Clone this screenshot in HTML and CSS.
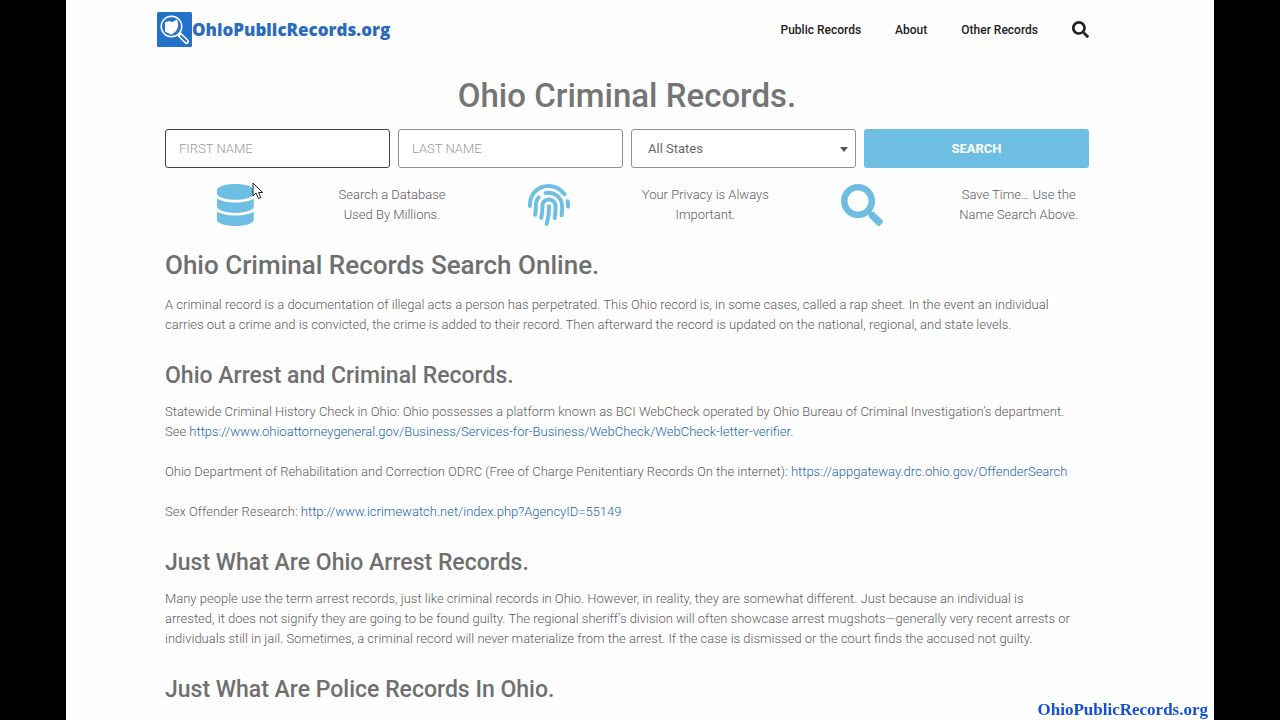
FILE: index.html
```
<!doctype html>
<html lang="en">
<head>
<meta charset="utf-8">
<meta name="viewport" content="width=device-width, initial-scale=1">
<title>Ohio Criminal Records</title>
<link rel="stylesheet" href="styles.css">
</head>
<body>
<div class="page">
<div class="wrap">

	<header class="header">
		<a class="logo" href="#">
			<svg class="logo-icon" viewBox="0 0 35 35" aria-hidden="true">
				<rect width="35" height="35" rx="1.5" fill="#2372c9"/>
				<path d="M22.5 22.5l7 7" stroke="#fff" stroke-width="5" stroke-linecap="round"/>
				<path d="M24 24l5.300 5.300" stroke="#2372c9" stroke-width="2" stroke-linecap="round"/>
				<circle cx="14.500" cy="14.500" r="10.300" fill="#2372c9" stroke="#fff" stroke-width="1.500"/>
				<path d="M8.500 10.300l4.500-.6 2 1 5-2.600.6 6.400-1.800 4.300-3.300 2.900-2 .2-3.500-2-1.500-.2z" fill="#fff" stroke="#fff" stroke-linejoin="round"/>
			</svg>
			<span>OhioPublicRecords.org</span>
		</a>
		<nav class="nav">
			<a href="#">Public Records</a>
			<a href="#">About</a>
			<a href="#">Other Records</a>
			<button class="nav-search" type="button" aria-label="Search">
				<svg viewBox="0 0 512 512"><path d="M505 442.700L405.300 343c-4.500-4.500-10.600-7-17-7H372c27.600-35.300 44-79.700 44-128C416 93.100 322.900 0 208 0S0 93.100 0 208s93.100 208 208 208c48.300 0 92.700-16.400 128-44v16.300c0 6.400 2.500 12.500 7 17l99.700 99.700c9.400 9.400 24.600 9.400 33.900 0l28.300-28.300c9.400-9.400 9.400-24.600.1-34zM208 336c-70.700 0-128-57.200-128-128 0-70.700 57.200-128 128-128 70.700 0 128 57.200 128 128 0 70.700-57.200 128-128 128z"/></svg>
			</button>
		</nav>
	</header>

	<main>
		<h1>Ohio Criminal Records.</h1>

		<form class="search-form">
			<input class="field focus" type="text" placeholder="FIRST NAME" aria-label="First name">
			<input class="field" type="text" placeholder="LAST NAME" aria-label="Last name">
			<div class="select-box">
				<select class="field" aria-label="State"><option>All States</option></select>
			</div>
			<button class="btn" type="button">SEARCH</button>
		</form>

		<div class="features">
			<div class="icon">
				<svg viewBox="0 0 448 512" aria-hidden="true"><path d="M448 73.143v45.714C448 159.143 347.667 192 224 192S0 159.143 0 118.857V73.143C0 32.857 100.333 0 224 0s224 32.857 224 73.143zM448 176v102.857C448 319.143 347.667 352 224 352S0 319.143 0 278.857V176c48.125 33.143 136.208 48.572 224 48.572S399.874 209.143 448 176zm0 160v102.857C448 479.143 347.667 512 224 512S0 479.143 0 438.857V336c48.125 33.143 136.208 48.572 224 48.572S399.874 369.143 448 336z"/></svg>
				<svg class="pointer" viewBox="0 0 12 18" aria-hidden="true"><path d="M1 1v13l3-3 2.500 5.500 2.300-1L6.500 10.500h4z" fill="#fff" stroke="#222"/></svg>
			</div>
			<p>Search a Database<br>Used By Millions.</p>
			<div class="icon">
				<svg viewBox="0 0 512 512" aria-hidden="true"><path d="M256.120 245.960c-13.250 0-24 10.740-24 24 1.140 72.250-8.140 141.900-27.700 211.550-2.730 9.720 2.150 30.490 23.120 30.490 10.480 0 20.110-6.920 23.090-17.520 13.530-47.910 31.040-125.410 29.480-224.520.01-13.250-10.730-24-23.990-24zm-.86-81.730C194 164.160 151.250 211.300 152.100 265.320c.75 47.940-3.750 95.910-13.370 142.550-2.690 12.980 5.670 25.690 18.640 28.360 13.050 2.670 25.670-5.660 28.360-18.640 10.340-50.090 15.170-101.580 14.370-153.020-.41-25.950 19.920-52.490 54.450-52.340 31.310.47 57.150 25.340 57.620 55.470.77 48.050-2.810 96.330-10.610 143.550-2.170 13.060 6.690 25.420 19.760 27.580 19.970 3.330 26.810-15.100 27.580-19.770 8.280-50.030 12.060-101.210 11.270-152.110-.88-55.800-47.940-101.880-104.910-102.720zm-110.690-19.780c-10.300-8.340-25.370-6.800-33.760 3.480-25.620 31.500-39.390 71.280-38.750 112 .59 37.580-2.470 75.270-9.110 112.050-2.340 13.050 6.310 25.530 19.360 27.890 20.110 3.500 27.070-14.810 27.890-19.360 7.190-39.840 10.500-80.660 9.860-121.330-.47-29.880 9.200-57.880 28-80.970 8.350-10.280 6.790-25.390-3.490-33.760zm109.470-62.330c-15.410-.41-30.870 1.440-45.780 4.970-12.890 3.060-20.870 15.980-17.830 28.890 3.060 12.890 16 20.830 28.890 17.830 11.050-2.610 22.470-3.770 34-3.690 75.430 1.130 137.730 61.500 138.880 134.580.59 37.880-1.280 76.110-5.580 113.630-1.500 13.170 7.950 25.080 21.110 26.580 16.720 1.950 25.510-11.880 26.580-21.110a929.060 929.060 0 0 0 5.890-119.850c-1.560-98.750-85.070-180.330-186.160-181.830zm252.070 121.450c-2.860-12.920-15.510-21.200-28.610-18.270-12.940 2.860-21.120 15.660-18.260 28.610 4.710 21.410 4.910 37.410 4.700 61.600-.11 13.270 10.550 24.090 23.800 24.200h.2c13.170 0 23.890-10.610 24-23.800.18-22.180.4-44.110-5.830-72.340zm-40.120-90.720C417.290 43.460 337.600 1.290 252.810.02 183.020-.82 118.470 24.910 70.460 72.940 24.090 119.370-.9 181.040.14 246.650l-.12 21.470c-.39 13.250 10.030 24.310 23.280 24.690.23.02.48.02.72.02 12.920 0 23.590-10.300 23.970-23.300l.16-23.640c-.83-52.500 19.160-101.860 56.280-139 38.760-38.800 91.340-59.670 147.680-58.860 69.450 1.030 134.730 35.560 174.620 92.390 7.610 10.860 22.560 13.450 33.420 5.860 10.840-7.620 13.460-22.590 5.840-33.430z"/></svg>
			</div>
			<p>Your Privacy is Always<br>Important.</p>
			<div class="icon">
				<svg viewBox="0 0 512 512" aria-hidden="true"><path d="M505 442.700L405.300 343c-4.500-4.500-10.600-7-17-7H372c27.600-35.300 44-79.700 44-128C416 93.100 322.900 0 208 0S0 93.100 0 208s93.100 208 208 208c48.300 0 92.700-16.400 128-44v16.300c0 6.400 2.500 12.500 7 17l99.700 99.700c9.400 9.400 24.600 9.400 33.900 0l28.300-28.300c9.400-9.400 9.400-24.600.1-34zM208 336c-70.700 0-128-57.200-128-128 0-70.700 57.200-128 128-128 70.700 0 128 57.200 128 128 0 70.700-57.200 128-128 128z"/></svg>
			</div>
			<p>Save Time… Use the<br>Name Search Above.</p>
		</div>

		<div class="content">
			<h2>Ohio Criminal Records Search Online.</h2>
			<p>A criminal record is a documentation of illegal acts a person has perpetrated. This Ohio record is, in some cases, called a rap sheet. In the event an individual carries out a crime and is convicted, the crime is added to their record. Then afterward the record is updated on the national, regional, and state levels.</p>

			<h3>Ohio Arrest and Criminal Records.</h3>
			<p>Statewide Criminal History Check in Ohio: Ohio possesses a platform known as BCI WebCheck operated by Ohio Bureau of Criminal Investigation’s department. See <a href="#">https://www.ohioattorneygeneral.gov/Business/Services-for-Business/WebCheck/WebCheck-letter-verifier.</a></p>
			<p>Ohio Department of Rehabilitation and Correction ODRC (Free of Charge Penitentiary Records On the internet): <a href="#">https://appgateway.drc.ohio.gov/OffenderSearch</a></p>
			<p>Sex Offender Research: <a href="#">http://www.icrimewatch.net/index.php?AgencyID=55149</a></p>

			<h3>Just What Are Ohio Arrest Records.</h3>
			<p>Many people use the term arrest records, just like criminal records in Ohio. However, in reality, they are somewhat different. Just because an individual is arrested, it does not signify they are going to be found guilty. The regional sheriff’s division will often showcase arrest mugshots—generally very recent arrests or individuals still in jail. Sometimes, a criminal record will never materialize from the arrest. If the case is dismissed or the court finds the accused not guilty.</p>

			<h3>Just What Are Police Records In Ohio.</h3>
		</div>
	</main>

</div>
</div>
<div class="watermark">OhioPublicRecords.org</div>
</body>
</html>
```
FILE: styles.css
```
*{ margin:0; padding:0; box-sizing:border-box}
body{ background:#000; padding:0 66px; font:300 13px/20px Roboto, sans-serif; color:#5c5c5c}
a{ color:#1a66b0; text-decoration:none}
svg{ display:block}

.page{ min-height:100vh; background:#fefefe; padding-right:26px}
.wrap{ max-width:940px; margin:0 auto}

.header{ display:flex; justify-content:space-between; align-items:center; height:59px; padding-right:8px}
.logo{ display:flex; align-items:center; color:#2b6cbf; font:800 17px/24px "Open Sans", sans-serif}
.logo-icon{ width:35px; height:35px}
.nav{ display:flex; align-items:center; gap:34px}
.nav a{ color:#222; font-size:12px; font-weight:500}
.nav-search{ border:0; background:none; cursor:pointer}
.nav-search svg{ width:17px; height:17px; fill:#222}

h1{ font-size:33px; line-height:40px; font-weight:500; color:#757575; text-align:center; padding-top:17px; margin-bottom:13px}
h2,h3{ font-weight:500; color:#6f6f6f}

.search-form{ display:grid; grid-template-columns:repeat(4,1fr); gap:8px; padding:0 8px}
.field{ display:block; width:100%; height:39px; border:1px solid #909090; border-radius:3px; background:#fff; padding:0 13px; font:300 13px/20px Roboto, sans-serif; color:#666; outline:none}
.field::placeholder{ color:#999; opacity:1}
.focus{ border-color:#444}
.select-box{ position:relative}
.select-box select{ appearance:none; padding:0 16px; font-weight:400}
.select-box:after{ content:""; position:absolute; right:8px; top:18px; border:4px solid transparent; border-top:5px solid #555; border-bottom:0; pointer-events:none}
.btn{ border:0; border-radius:3px; background:#6ebee3; color:#fff; font:700 13px/20px Roboto, sans-serif; cursor:pointer}

.features{ display:grid; grid-template-columns:repeat(6,1fr); align-items:center; padding-top:16px; text-align:center}
.icon{ position:relative}
.icon svg{ height:42px; margin:0 auto; fill:#6ebee3}
.icon .pointer{ position:absolute; left:95px; top:-2px; width:12px; height:18px}

.content{ padding:24px 8px 0}
.content h2{ font-size:26px; line-height:30px; margin-bottom:15px}
.content h3{ font-size:23px; line-height:30px; margin:26px 0 11px}
.content p{ padding-right:16px}
.content p + p{ margin-top:20px}

.watermark{ position:fixed; right:72px; bottom:0; font:bold 17px/20px "Liberation Serif", serif; color:#1450d2}
```
